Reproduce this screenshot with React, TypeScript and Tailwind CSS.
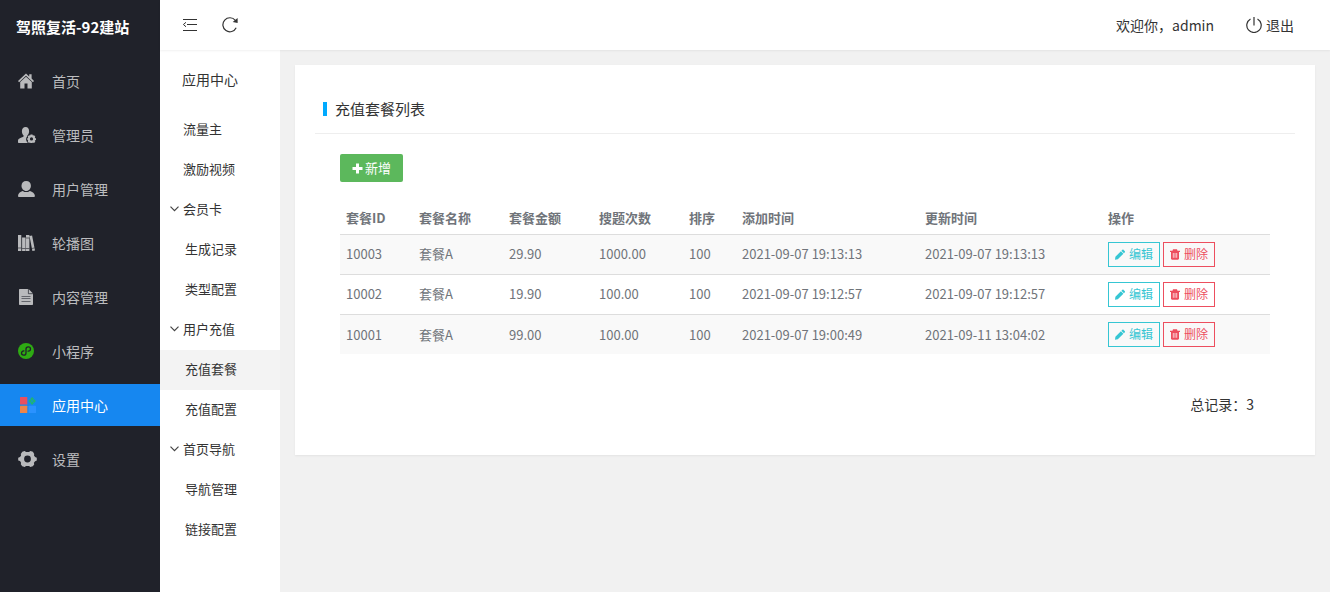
import type { ReactNode } from "react";

const GREY = "#b9babc";

function HomeIcon() {
  return (
    <svg width="16" height="16" viewBox="0 0 16 16" fill={GREY} aria-hidden="true">
      <path d="M8 0.6 0 7.900l1.100 1.300L8 2.800l6.900 6.400L16 7.900l-2.400-2.300V1.200h-2.400v2.200z" />
      <path d="M8 3.800 2.200 9v6.400h4.300V10.600h3v4.800h4.300V9z" />
    </svg>
  );
}

function AdminIcon() {
  return (
    <svg width="18" height="16" viewBox="0 0 18 16" fill={GREY} aria-hidden="true">
      <path d="M7.600 0C5.200 0 3.900 1.900 3.900 4.200c0 1.700.7 3.300 1.700 4.200v1.200C4.600 10.500 0 11.400 0 13.700V15c0 .6.400 1 1 1h8.800a5.200 5.200 0 0 1-.4-6.900l-.1-.7c1.100-.9 1.800-2.500 1.800-4.200C11.100 1.900 10 0 7.600 0z" />
      <path
        fillRule="evenodd"
        d="M12.500 7.400h2l.4 1.100 1.200-.3 1.200 1.500-.5 1.100 1.200.6v1.500l-1.200.6.500 1.200-1.300 1.300-1.100-.5-.5.500h-2l-.4-.6-1.100.5-1.200-1.300.5-1.200-.9-.6v-1.500l.9-.5-.4-1.200 1.200-1.400 1.100.4zM13.500 10.300a1.600 1.600 0 1 0 0 3.200 1.600 1.600 0 0 0 0-3.200z"
      />
    </svg>
  );
}

function UserIcon() {
  return (
    <svg width="17" height="16" viewBox="0 0 17 16" fill={GREY} aria-hidden="true">
      <path d="M8.200 0C5.400 0 3.500 2 3.500 4.700s1.900 5.300 4.700 5.300 4.700-2.600 4.700-5.300S11 0 8.200 0z" />
      <path d="M4.800 9.900C2.200 10.700 0 12.200 0 15c0 .6.300 1 .9 1H16c.600 0 .9-.4.900-1 0-2.800-2.500-4.300-5.200-5.100-1 .8-2.200 1.200-3.500 1.200s-2.500-.4-3.400-1.200z" />
    </svg>
  );
}

function BooksIcon() {
  return (
    <svg width="17" height="16" viewBox="0 0 17 16" aria-hidden="true">
      <path fill={GREY} d="M0 0h3.300v16H0zM4.100 2.500h3.500V16H4.100zM8 0h3.400v16H8zM11.500 1l2.600-.5L17 15.400l-2.600.6z" />
      <path stroke="#20222a" strokeWidth=".6" d="M0 13h3.300M4.100 13.500h3.500M8 13.500h3.400M13.900 13.500l2.800-.6M8 3h3.400" />
    </svg>
  );
}

function DocIcon() {
  return (
    <svg width="16" height="16" viewBox="0 0 16 16" aria-hidden="true">
      <path fill={GREY} d="M1 1c0-.6.400-1 1-1h8.600L15 4.600V15c0 .6-.4 1-1 1H2c-.6 0-1-.4-1-1z" />
      <path fill="none" stroke="#20222a" strokeWidth=".7" d="M10.400 0v4.700H15" />
      <path stroke="#63656b" d="M3.500 7.500h9M3.500 9.500h9M3.500 12.500h9" />
    </svg>
  );
}

function MiniProgramIcon() {
  return (
    <svg width="16" height="16" viewBox="0 0 16 16" aria-hidden="true">
      <circle cx="8" cy="8" r="8" fill="#2eab13" />
      <path
        fill="none"
        stroke="#20222a"
        strokeWidth="1.300"
        strokeLinecap="round"
        d="M5.900 7.800C4.300 8 3.500 9 3.500 10.100c0 1.200 1 2 2.200 2 1.300 0 2.300-.9 2.300-2.200V6.100c0-1.300 1-2.200 2.300-2.200 1.200 0 2.200.8 2.200 2 0 1.100-.8 2.100-2.400 2.300"
      />
    </svg>
  );
}

function AppsIcon() {
  return (
    <svg width="16" height="16" viewBox="0 0 16 16" aria-hidden="true">
      <rect width="7.300" height="7.500" rx=".5" fill="#e9505f" />
      <rect y="8.700" width="7.300" height="7.300" rx=".5" fill="#ee8549" />
      <rect x="8.500" y="8.700" width="7.500" height="7.300" rx=".5" fill="#2a92ff" />
      <path fill="#1fb573" d="m12.100 0 3.800 4-3.800 4-3.800-4z" />
      <path stroke="#1687f0" strokeWidth=".5" d="m10.200 2 3.800 4M14 2l-3.800 4" />
    </svg>
  );
}

function GearIcon() {
  return (
    <svg width="19" height="16" viewBox="0 0 19 16" fill={GREY} aria-hidden="true">
      <path
        fillRule="evenodd"
        d="M4.300.7 6.700 0 8 1.100h3L12.400 0l2.500.7 1.300 2.200-.2 1.700L17.100 6l1.700.8v2.600l-1.700.8-1.200 1.600.3 1.700-1.400 1.800-2.400.7L11 14.900H8L6.700 16l-2.500-.8-1.400-2 .3-1.500L2 10.100.2 9.400V6.800L2 6l1.100-1.500-.3-1.600zM9.500 4.600a3.400 3.400 0 1 0 0 6.800 3.400 3.400 0 0 0 0-6.800z"
      />
    </svg>
  );
}

function CollapseIcon() {
  return (
    <svg width="16" height="14" viewBox="0 0 16 14" fill="none" stroke="#333" aria-hidden="true">
      <path d="M1 1.500h14M5 6.500h10M1 12.500h14M4 4.300 1.400 6.500 4 8.800" />
    </svg>
  );
}

function RefreshIcon() {
  return (
    <svg width="16" height="16" viewBox="0 0 16 16" fill="none" stroke="#333" aria-hidden="true">
      <path strokeWidth="1.200" d="M14.200 10.800A7 7 0 1 1 13.300 3.300" />
      <path fill="#333" stroke="none" d="M15.600 1v5l-4.900-.9z" />
    </svg>
  );
}

function PowerIcon() {
  return (
    <svg width="16" height="16" viewBox="0 0 16 16" fill="none" stroke="#333" strokeWidth="1.200" aria-hidden="true">
      <path d="M8 0v8.500M4.500 2A7.200 7.200 0 1 0 11.500 2" />
    </svg>
  );
}

function PlusIcon() {
  return (
    <svg width="11" height="11" viewBox="0 0 11 11" fill="currentColor" aria-hidden="true">
      <path d="M4 .5h3V4h3.500v3H7v3.500H4V7H.5V4H4z" />
    </svg>
  );
}

function PencilIcon() {
  return (
    <svg width="10" height="11" viewBox="0 0 10 11" fill="currentColor" aria-hidden="true">
      <path d="M7.300.9c.4-.4.900-.4 1.300 0l1.100 1.200c.4.400.4.900 0 1.300l-.8.8-2.500-2.500zM5.900 2.200l2.500 2.500-5.600 5.600L0 10.700l.4-2.900z" />
    </svg>
  );
}

function TrashIcon() {
  return (
    <svg width="10" height="11" viewBox="0 0 10 11" aria-hidden="true">
      <path fill="currentColor" d="M3 .3h4l.5 1.400H10v1.200H9V9.600c0 .6-.5 1.100-1.100 1.100H2.100C1.500 10.700 1 10.200 1 9.600V2.900H0V1.700h2.500z" />
      <path fill="none" stroke="#fff" strokeWidth=".7" d="M3.300 4v4.800M5 4v4.800M6.700 4v4.800" />
    </svg>
  );
}

function Chevron() {
  return (
    <svg width="9" height="6" viewBox="0 0 9 6" fill="none" stroke="#444" strokeWidth="1.200" aria-hidden="true">
      <path d="m.500.700 4 4 4-4" />
    </svg>
  );
}

const NAV: { label: string; icon: ReactNode; active?: boolean }[] = [
  { label: "首页", icon: <HomeIcon /> },
  { label: "管理员", icon: <AdminIcon /> },
  { label: "用户管理", icon: <UserIcon /> },
  { label: "轮播图", icon: <BooksIcon /> },
  { label: "内容管理", icon: <DocIcon /> },
  { label: "小程序", icon: <MiniProgramIcon /> },
  { label: "应用中心", icon: <AppsIcon />, active: true },
  { label: "设置", icon: <GearIcon /> },
];

const MENU: { label: string; kind: "item" | "group" | "child"; active?: boolean }[] = [
  { label: "流量主", kind: "item" },
  { label: "激励视频", kind: "item" },
  { label: "会员卡", kind: "group" },
  { label: "生成记录", kind: "child" },
  { label: "类型配置", kind: "child" },
  { label: "用户充值", kind: "group" },
  { label: "充值套餐", kind: "child", active: true },
  { label: "充值配置", kind: "child" },
  { label: "首页导航", kind: "group" },
  { label: "导航管理", kind: "child" },
  { label: "链接配置", kind: "child" },
];

const COLUMNS = [
  { label: "套餐ID", width: "w-[73px]" },
  { label: "套餐名称", width: "w-[90px]" },
  { label: "套餐金额", width: "w-[90px]" },
  { label: "搜题次数", width: "w-[90px]" },
  { label: "排序", width: "w-[53px]" },
  { label: "添加时间", width: "w-[183px]" },
  { label: "更新时间", width: "w-[183px]" },
  { label: "操作", width: "" },
];

const ROWS = [
  ["10003", "套餐A", "29.90", "1000.00", "100", "2021-09-07 19:13:13", "2021-09-07 19:13:13"],
  ["10002", "套餐A", "19.90", "100.00", "100", "2021-09-07 19:12:57", "2021-09-07 19:12:57"],
  ["10001", "套餐A", "99.00", "100.00", "100", "2021-09-07 19:00:49", "2021-09-11 13:04:02"],
];

const actionCls = "flex h-[25px] items-center gap-1 border px-1.5 text-xs";

function Sidebar() {
  return (
    <aside className="w-40 shrink-0 bg-[#20222a]">
      <h1 className="flex h-[60px] items-center px-4 pb-1.5 text-[15px] font-bold whitespace-nowrap text-white">
        驾照复活-92建站
      </h1>
      <nav className="flex flex-col gap-3">
        {NAV.map(({ label, icon, active }) => (
          <a
            key={label}
            href="#"
            className={`flex h-[42px] items-center pl-[18px] text-sm ${
              active ? "bg-[#1687f0] text-white" : "text-[#bcbdbf]"
            }`}
          >
            <span className={`flex w-[34px] ${active ? "pl-0.5" : ""}`}>{icon}</span>
            {label}
          </a>
        ))}
      </nav>
    </aside>
  );
}

function SubMenu() {
  return (
    <nav className="w-[120px] shrink-0 bg-white text-[#333]">
      <h2 className="flex h-[60px] items-center pb-0.5 pl-[22px] text-sm">应用中心</h2>
      {MENU.map(({ label, kind, active }) => (
        <a
          key={label}
          href="#"
          className={`flex h-10 items-center pb-0.5 text-[13px] ${active ? "bg-[#f3f3f3]" : ""} ${
            kind === "group" ? "gap-1 pl-2.5" : kind === "child" ? "pl-[25px]" : "pl-[23px]"
          }`}
        >
          {kind === "group" && <Chevron />}
          {label}
        </a>
      ))}
    </nav>
  );
}

function PackageTable() {
  return (
    <table className="mt-5 w-full table-fixed text-left text-[13px] text-[#70747a]">
      <thead>
        <tr className="h-8">
          {COLUMNS.map(({ label, width }) => (
            <th key={label} className={`px-1.5 font-bold ${width}`}>
              {label}
            </th>
          ))}
        </tr>
      </thead>
      <tbody>
        {ROWS.map((row) => (
          <tr key={row[0]} className="h-10 border-t border-[#ddd] odd:bg-[#f9f9f9]">
            {row.map((cell, i) => (
              <td key={i} className="px-1.5 whitespace-nowrap">
                {cell}
              </td>
            ))}
            <td className="px-1.5">
              <div className="flex gap-[3px]">
                <button type="button" className={`${actionCls} border-[#36c6d3] text-[#36c6d3]`}>
                  <PencilIcon />
                  编辑
                </button>
                <button type="button" className={`${actionCls} border-[#ed4e5e] text-[#ed4e5e]`}>
                  <TrashIcon />
                  删除
                </button>
              </div>
            </td>
          </tr>
        ))}
      </tbody>
    </table>
  );
}

export default function App() {
  return (
    <div className="flex min-h-screen bg-[#f1f1f1] font-['Noto_Sans_CJK_SC',sans-serif] text-[#333]">
      <Sidebar />
      <div className="flex min-w-0 flex-1 flex-col">
        <header className="relative flex h-[50px] items-center justify-between bg-white px-[22px] shadow-[0_1px_2px_rgba(0,0,0,0.06)]">
          <div className="flex items-center gap-6">
            <button type="button" aria-label="Collapse menu">
              <CollapseIcon />
            </button>
            <button type="button" aria-label="Refresh">
              <RefreshIcon />
            </button>
          </div>
          <div className="flex items-center gap-8 pr-3.5 text-sm">
            <span>欢迎你，admin</span>
            <a href="#" className="flex items-center gap-1">
              <PowerIcon />
              退出
            </a>
          </div>
        </header>
        <div className="flex flex-1">
          <SubMenu />
          <main className="min-w-0 flex-1 p-[15px]">
            <section className="bg-white px-5 pt-5 pb-[41px] shadow-[0_1px_2px_rgba(0,0,0,0.06)]">
              <h2 className="flex h-[49px] items-center gap-2 border-b border-[#eee] pl-2 text-[15px]">
                <span className="h-3.5 w-1 bg-[#00aaff]" />
                充值套餐列表
              </h2>
              <div className="px-[25px] pt-5">
                <button
                  type="button"
                  className="flex h-7 items-center gap-0.5 rounded-xs bg-[#5cb85c] px-3 text-[13px] text-white"
                >
                  <PlusIcon />
                  新增
                </button>
                <PackageTable />
                <p className="pt-10 pr-4 text-right text-sm">总记录：3</p>
              </div>
            </section>
          </main>
        </div>
      </div>
    </div>
  );
}
